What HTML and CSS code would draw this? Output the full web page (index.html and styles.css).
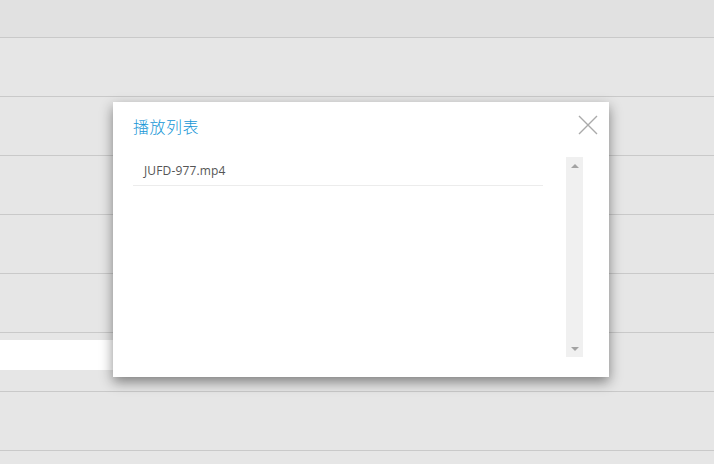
FILE: index.html
```html
<!DOCTYPE html>
<html>
<head>
<meta charset="utf-8">
<link rel="stylesheet" href="styles.css">
</head>
<body>
<div class="page">
  <div class="topbar"></div>
  <div class="row"></div>
  <div class="row"></div>
  <div class="row"></div>
  <div class="row"></div>
  <div class="row"></div>
  <div class="row"><div class="field"></div></div>
  <div class="row"></div>
  <div class="row"></div>
</div>
<div class="dialog">
  <div class="dialog-head">
    <div class="dialog-title">播放列表</div>
    <svg class="close" width="20" height="20" viewBox="0 0 20 20"><path d="M1 1 L19 19 M19 1 L1 19" stroke="#aaaaaa" stroke-width="1.4" fill="none"/></svg>
  </div>
  <div class="dialog-body">
    <ul class="playlist">
      <li class="item">JUFD-977.mp4</li>
    </ul>
    <div class="scrollbar">
      <span class="arrow-up"></span>
      <span class="arrow-down"></span>
    </div>
  </div>
</div>
</body>
</html>
```
FILE: styles.css
```css
html, body {
  margin: 0;
  padding: 0;
  background: #e6e6e6;
  font-family: "Open Sans", "Noto Sans CJK SC", sans-serif;
}
.page {
  width: 714px;
  height: 464px;
  overflow: hidden;
}
.topbar {
  height: 37px;
  background: #e1e1e1;
  border-bottom: 1px solid #c9c9c9;
}
.row {
  display: flow-root;
  height: 58px;
  background: #e6e6e6;
  border-bottom: 1px solid #c9c9c9;
}
.field {
  margin-top: 7px;
  width: 200px;
  height: 30px;
  background: #ffffff;
}
.dialog {
  position: absolute;
  left: 113px;
  top: 102px;
  width: 496px;
  height: 275px;
  background: #ffffff;
  box-shadow: 0 5px 12px rgba(0, 0, 0, 0.45);
  box-sizing: border-box;
  padding: 0 26px 0 20px;
  display: flex;
  flex-direction: column;
}
.dialog-head {
  height: 55px;
  display: flex;
  justify-content: space-between;
  align-items: flex-start;
}
.dialog-title {
  margin-top: 14px;
  font-size: 16px;
  line-height: 20px;
  color: #1596d6;
  font-family: "Noto Sans CJK SC", sans-serif;
  font-weight: 300;
  letter-spacing: 0.5px;
}
.close {
  margin-top: 13px;
  margin-right: -15px;
}
.dialog-body {
  display: flex;
  justify-content: space-between;
  height: 200px;
}
.playlist {
  list-style: none;
  margin: 0;
  padding: 0;
  width: 410px;
}
.item {
  height: 29px;
  line-height: 28px;
  padding-left: 11px;
  border-bottom: 1px solid #ececec;
  font-size: 12px;
  letter-spacing: 0.15px;
  color: #555555;
  box-sizing: border-box;
}
.scrollbar {
  width: 17px;
  height: 200px;
  background: #f0f0f0;
  display: flex;
  flex-direction: column;
  justify-content: space-between;
  align-items: center;
  padding: 7px 0 6px;
  box-sizing: border-box;
}
.arrow-up {
  width: 0;
  height: 0;
  border-left: 4px solid transparent;
  border-right: 4px solid transparent;
  border-bottom: 4px solid #a3a3a3;
}
.arrow-down {
  width: 0;
  height: 0;
  border-left: 4px solid transparent;
  border-right: 4px solid transparent;
  border-top: 4px solid #a3a3a3;
}
```
